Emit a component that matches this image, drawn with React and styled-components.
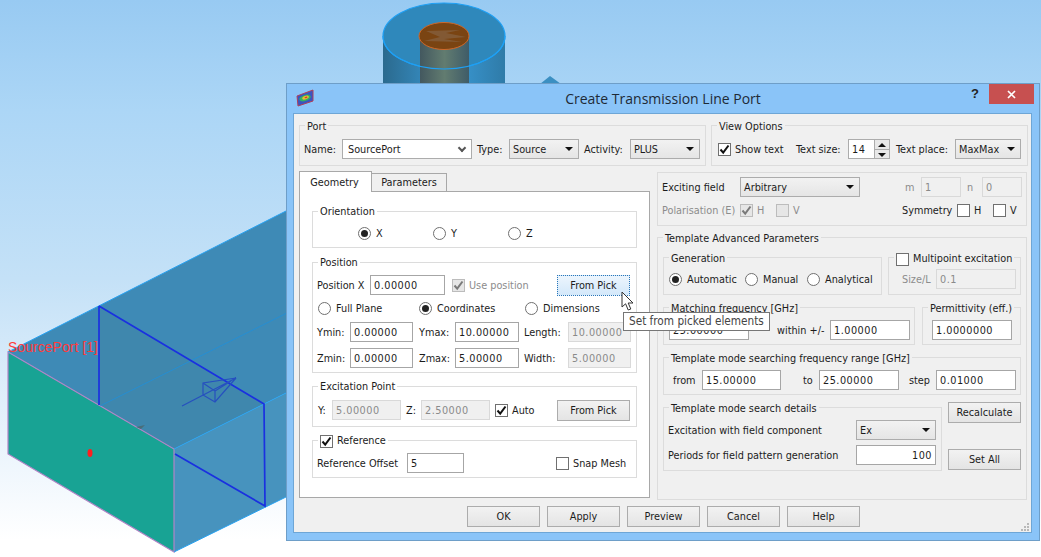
import React from 'react'
import styled, { createGlobalStyle } from 'styled-components'

const GlobalStyle = createGlobalStyle`
  body {
    margin: 0;
    background: #ffffff;
    font-family: "DejaVu Sans Condensed", "Liberation Sans", sans-serif;
    font-stretch: condensed;
    font-size: 10.8px;
    color: #1c1c1c;
  }
`

const Scene3D = () => (
  <SceneSvg viewBox="0 0 1041 557">
    <defs>
      <linearGradient id="outerBody" x1="0" x2="1" y1="0" y2="0">
        <stop offset="0" stopColor="#2b6a8e" />
        <stop offset="0.55" stopColor="#3a9ad6" />
        <stop offset="1" stopColor="#2f7ba8" />
      </linearGradient>
      <linearGradient id="innerBody" x1="0" x2="1" y1="0" y2="0">
        <stop offset="0" stopColor="#43585f" />
        <stop offset="0.5" stopColor="#627c70" />
        <stop offset="1" stopColor="#3f5c68" />
      </linearGradient>
    </defs>

    <rect x="383" y="36" width="122" height="50" fill="url(#outerBody)" />
    <ellipse cx="444" cy="36" rx="61" ry="33" fill="#2f88bb" stroke="#1ea0f5" strokeWidth="1.2" />
    <rect x="420" y="36" width="49" height="50" fill="url(#innerBody)" />
    <path d="M383 36 A61 33 0 0 0 505 36" fill="none" stroke="#1ea0f5" strokeWidth="1.2" />
    <ellipse cx="444" cy="36" rx="25" ry="13.5" fill="#7a4412" stroke="#d0692a" strokeWidth="1" />
    <path d="M426 31 L460 30 L446 33 L466 37 L444 39 L462 42 L424 41 L440 37 Z" fill="#8e7a68" opacity="0.4" />
    <polygon points="540,84 550,76 561,84" fill="#3b8fc2" />

    <polygon points="8,352 286,211 286,393 174,449" fill="#3e8ab6" />
    <polygon points="99,306 264,404 174,449 99,405" fill="#42829f" opacity="0.35" />
    <polygon points="174,449 286,393 286,497 174,552" fill="#4793be" />
    <polygon points="8,352 174,449 174,552 8,454" fill="#18a394" stroke="#b184c6" strokeWidth="1.2" />
    <path d="M8 352 L286 211 M174 449 L286 393 M174 552 L286 497" stroke="#27a2f2" strokeWidth="1" fill="none" />
    <path d="M100 406 L287 313" stroke="#1f8fdb" strokeWidth="0.8" fill="none" />
    <path d="M99 306 L99 405 M99 306 L264 404 L265 506 L175 454" stroke="#1a30e0" strokeWidth="1.7" fill="none" />
    <path d="M182 406 L236 378 L203 383 L203 395 L215 402 L236 378 M203 383 L215 391 L215 402 M215 391 L231 381" stroke="#2650bf" strokeWidth="1.2" fill="none" />
    <ellipse cx="90" cy="453" rx="2.5" ry="4" fill="#ff1f1f" />
    <polygon points="136,427 145,425 141,429" fill="#4a6d78" />
    <SceneLabel x="8" y="352" textLength="90">SourcePort [1]</SceneLabel>
  </SceneSvg>
)

const AppIcon = () => (
  <svg width="18" height="18" viewBox="0 0 18 18">
    <polygon points="1,7 17,1 17,12 2,17" fill="#3a55c0" stroke="#b0405a" strokeWidth="1" />
    <ellipse cx="9" cy="9" rx="6" ry="3" fill="#35b060" transform="rotate(-18 9 9)" />
    <ellipse cx="9.5" cy="8.6" rx="3.4" ry="1.7" fill="#e8c030" transform="rotate(-18 9.5 8.6)" />
    <ellipse cx="10" cy="8.4" rx="1.5" ry="0.8" fill="#d84030" transform="rotate(-18 10 8.4)" />
  </svg>
)

const Check = ({ checked, off, label, w, ml }) => (
  <Opt $w={w} $ml={ml} $off={off}>
    <Box $off={off}>
      {checked && (
        <svg width="11" height="11" viewBox="0 0 11 11">
          <path d="M1.5 5.5 L4.2 8.6 L9.5 1.5" fill="none" stroke={off ? '#7a7a7a' : '#111'} strokeWidth="2" />
        </svg>
      )}
    </Box>
    {label}
  </Opt>
)

const Radio = ({ checked, label, w }) => (
  <Opt $w={w}>
    <Round $on={checked} />
    {label}
  </Opt>
)

const Cursor = () => (
  <CursorSvg width="15" height="21" viewBox="0 0 15 21">
    <path d="M1 1 L1 16 L4.6 12.8 L7.2 19 L9.8 18 L7.2 12 L12 12 Z" fill="#ffffff" stroke="#333" strokeWidth="1" />
  </CursorSvg>
)

export default function App() {
  return (
    <Desktop>
      <GlobalStyle />
      <Scene3D />
      <Window>
        <TitleBar>
          <TitleIcon><AppIcon /></TitleIcon>
          <TitleText>Create Transmission Line Port</TitleText>
          <TitleControls>
            <HelpMark>?</HelpMark>
            <CloseButton>
              <svg width="9" height="9" viewBox="0 0 9 9">
                <path d="M1 1 L8 8 M8 1 L1 8" stroke="#fff" strokeWidth="1.7" fill="none" />
              </svg>
            </CloseButton>
          </TitleControls>
        </TitleBar>

        <Client>
          <Line>
            <Group $w={407} $h={41}>
              <Legend>Port</Legend>
              <Row $h={20} $mt={13} $pl={4}>
                <Label $w={38}>Name:</Label>
                <Combo $w={130} $editable>SourcePort</Combo>
                <Label $w={32} $ml={5}>Type:</Label>
                <Combo $w={70}>Source</Combo>
                <Label $w={46} $ml={5}>Activity:</Label>
                <Combo $w={70}>PLUS</Combo>
              </Row>
            </Group>
            <Group $w={317} $h={41} $ml={5}>
              <Legend>View Options</Legend>
              <Row $h={20} $mt={13} $pl={6}>
                <Check checked label="Show text" w={78} />
                <Label $w={52}>Text size:</Label>
                <Spin>
                  14
                  <SpinArrows>
                    <SpinUp />
                    <SpinDown />
                  </SpinArrows>
                </Spin>
                <Label $w={59} $ml={6}>Text place:</Label>
                <Combo $w={66}>MaxMax</Combo>
              </Row>
            </Group>
          </Line>

          <Line $mt={5}>
            <LeftColumn>
              <TabBar>
                <Tab $active>Geometry</Tab>
                <Tab>Parameters</Tab>
              </TabBar>
              <Pane>
                <Group $h={37} $white>
                  <Legend $white>Orientation</Legend>
                  <Row $h={14} $mt={14} $pl={45}>
                    <Radio checked label="X" w={75} />
                    <Radio label="Y" w={75} />
                    <Radio label="Z" w={75} />
                  </Row>
                </Group>

                <Group $h={111} $white $mt={14}>
                  <Legend $white>Position</Legend>
                  <Row $h={20} $mt={12} $pl={4}>
                    <Label $w={53}>Position X</Label>
                    <Field $w={75}>0.00000</Field>
                    <Check checked off label="Use position" w={105} ml={7} />
                    <Button $w={73} $focus>From Pick</Button>
                  </Row>
                  <Row $h={14} $mt={6} $pl={5}>
                    <Radio label="Full Plane" w={101} />
                    <Radio checked label="Coordinates" w={106} />
                    <Radio label="Dimensions" />
                  </Row>
                  <Row $h={20} $mt={7} $pl={4}>
                    <Label $w={33}>Ymin:</Label>
                    <Field $w={63}>0.00000</Field>
                    <Label $w={36} $ml={6}>Ymax:</Label>
                    <Field $w={64}>10.00000</Field>
                    <Label $w={44} $ml={5}>Length:</Label>
                    <Field $w={63} $off>10.00000</Field>
                  </Row>
                  <Row $h={20} $mt={6} $pl={4}>
                    <Label $w={33}>Zmin:</Label>
                    <Field $w={63}>0.00000</Field>
                    <Label $w={36} $ml={6}>Zmax:</Label>
                    <Field $w={64}>5.00000</Field>
                    <Label $w={44} $ml={5}>Width:</Label>
                    <Field $w={63} $off>5.00000</Field>
                  </Row>
                </Group>

                <Group $h={41} $white $mt={13}>
                  <Legend $white>Excitation Point</Legend>
                  <Row $h={20} $mt={13} $pl={5}>
                    <Label $w={14}>Y:</Label>
                    <Field $w={69} $off>5.00000</Field>
                    <Label $w={15} $ml={5}>Z:</Label>
                    <Field $w={69} $off>2.50000</Field>
                    <Check checked label="Auto" w={62} ml={5} />
                    <Button $w={73}>From Pick</Button>
                  </Row>
                </Group>

                <Group $h={38} $white $mt={13}>
                  <Legend $white>
                    <Check checked label="Reference" />
                  </Legend>
                  <Row $h={20} $mt={12} $pl={4}>
                    <Label $w={90}>Reference Offset</Label>
                    <Field $w={57}>5</Field>
                    <Check label="Snap Mesh" ml={92} />
                  </Row>
                </Group>
              </Pane>
            </LeftColumn>

            <RightColumn>
              <Group $h={54}>
                <Row $h={20} $mt={4} $pl={4}>
                  <Label $w={78}>Exciting field</Label>
                  <Combo $w={120}>Arbitrary</Combo>
                  <Label $w={16} $ml={45} $off>m</Label>
                  <Field $w={40} $off>1</Field>
                  <Label $w={15} $ml={6} $off>n</Label>
                  <Field $w={40} $off>0</Field>
                </Row>
                <Row $h={14} $mt={6} $pl={4}>
                  <Label $w={78} $off>Polarisation (E)</Label>
                  <Check checked off label="H" w={36} />
                  <Check off label="V" w={126} />
                  <Label $w={55}>Symmetry</Label>
                  <Check label="H" w={36} />
                  <Check label="V" />
                </Row>
              </Group>

              <Group $h={263} $mt={11}>
                <Legend>Template Advanced Parameters</Legend>
                <Line $mt={19} $pl={5}>
                  <Group $w={219} $h={38}>
                    <Legend>Generation</Legend>
                    <Row $h={14} $mt={14} $pl={5}>
                      <Radio checked label="Automatic" w={76} />
                      <Radio label="Manual" w={62} />
                      <Radio label="Analytical" />
                    </Row>
                  </Group>
                  <Group $w={133} $h={38} $ml={6}>
                    <Legend>
                      <Check label="Multipoint excitation" />
                    </Legend>
                    <Row $h={20} $mt={11} $pl={13}>
                      <Label $w={34} $off>Size/L</Label>
                      <Field $w={80} $off>0.1</Field>
                    </Row>
                  </Group>
                </Line>

                <Line $mt={12} $pl={5}>
                  <Group $w={252} $h={38}>
                    <Legend>Matching frequency [GHz]</Legend>
                    <Row $h={20} $mt={12} $pl={5}>
                      <Field $w={80}>25.00000</Field>
                      <Label $w={53} $ml={28}>within +/-</Label>
                      <Field $w={80}>1.00000</Field>
                    </Row>
                  </Group>
                  <Group $w={99} $h={38} $ml={7}>
                    <Legend>Permittivity (eff.)</Legend>
                    <Row $h={20} $mt={12} $pl={9}>
                      <Field $w={80}>1.0000000</Field>
                    </Row>
                  </Group>
                </Line>

                <Line $mt={12} $pl={5}>
                  <Group $w={358} $h={38}>
                    <Legend>Template mode searching frequency range [GHz]</Legend>
                    <Row $h={20} $mt={12} $pl={9}>
                      <Label $w={29}>from</Label>
                      <Field $w={79}>15.00000</Field>
                      <Label $w={16} $ml={22}>to</Label>
                      <Field $w={80}>25.00000</Field>
                      <Label $w={27} $ml={10}>step</Label>
                      <Field $w={80}>0.01000</Field>
                    </Row>
                  </Group>
                </Line>

                <Line $mt={7} $pl={5}>
                  <Group $w={279} $h={64} $mt={5}>
                    <Legend>Template mode search details</Legend>
                    <Row $h={20} $mt={12} $pl={4}>
                      <Label $w={188}>Excitation with field component</Label>
                      <Combo $w={80}>Ex</Combo>
                    </Row>
                    <Row $h={20} $mt={5} $pl={4}>
                      <Label $w={188}>Periods for field pattern generation</Label>
                      <Field $w={80} $right>100</Field>
                    </Row>
                  </Group>
                  <SideButtons>
                    <Button $w={73}>Recalculate</Button>
                    <Button $w={73}>Set All</Button>
                  </SideButtons>
                </Line>
              </Group>
            </RightColumn>
          </Line>

          <ButtonBar>
            <Button $w={73}>OK</Button>
            <Button $w={73}>Apply</Button>
            <Button $w={73}>Preview</Button>
            <Button $w={73}>Cancel</Button>
            <Button $w={73}>Help</Button>
          </ButtonBar>

          <Grip width="8" height="8" viewBox="0 0 8 8">
            <path d="M6 0h2v2H6zM3 3h2v2H3zM6 3h2v2H6zM0 6h2v2H0zM3 6h2v2H3zM6 6h2v2H6z" fill="#b8b8b8" />
          </Grip>
        </Client>

        <Tooltip>Set from picked elements</Tooltip>
        <Cursor />
      </Window>
    </Desktop>
  )
}

const Desktop = styled.div`
  position: relative;
  width: 1041px;
  height: 557px;
  overflow: hidden;
  background: linear-gradient(180deg, #98caf2 0%, #acd6f6 20%, #c4e1f7 50%, #e8f3fc 78%, #ffffff 97%);
`
const SceneSvg = styled.svg`
  display: block;
  width: 1041px;
  height: 557px;
`
const SceneLabel = styled.text`
  font-family: "Liberation Sans", sans-serif;
  font-size: 14px;
  fill: #ff3b3b;
`
const Window = styled.div`
  position: absolute;
  left: 286px;
  top: 83px;
  width: 754px;
  height: 458px;
  box-sizing: border-box;
  display: flex;
  flex-direction: column;
  padding: 0 7px 7px 6px;
  background: #8ac4f8;
  border: 1px solid #6e9ec8;
`
const TitleBar = styled.div`
  display: grid;
  grid-template-columns: 1fr auto 1fr;
  align-items: start;
  height: 29px;
  margin: 0 -7px 0 -6px;
`
const TitleIcon = styled.div`
  padding: 5px 0 0 9px;
`
const TitleText = styled.div`
  padding-top: 5px;
  font-family: "Open Sans", sans-serif;
  font-stretch: normal;
  font-size: 14px;
  line-height: 19px;
  color: #1e2a36;
`
const TitleControls = styled.div`
  display: flex;
  justify-content: flex-end;
  padding-right: 5px;
`
const HelpMark = styled.div`
  margin: 2px 10px 0 0;
  font-family: "Liberation Sans", sans-serif;
  font-weight: bold;
  font-size: 13px;
  line-height: 16px;
  color: #222;
`
const CloseButton = styled.div`
  display: flex;
  align-items: center;
  justify-content: center;
  width: 45px;
  height: 20px;
  background: #c75050;
`
const Client = styled.div`
  position: relative;
  flex: 1;
  box-sizing: border-box;
  padding: 11px 0 0 5px;
  background: #f0f0f0;
  border: 1px solid #6ea6d6;
`
const Line = styled.div`
  display: flex;
  margin-top: ${p => p.$mt || 0}px;
  padding-left: ${p => p.$pl || 0}px;
`
const Row = styled.div`
  display: flex;
  align-items: center;
  height: ${p => p.$h}px;
  margin-top: ${p => p.$mt || 0}px;
  padding-left: ${p => p.$pl || 0}px;
`
const Group = styled.div`
  position: relative;
  box-sizing: border-box;
  flex-shrink: 0;
  display: flow-root;
  width: ${p => (p.$w ? `${p.$w}px` : 'auto')};
  height: ${p => p.$h}px;
  margin-top: ${p => p.$mt || 0}px;
  margin-left: ${p => p.$ml || 0}px;
  border: 1px solid #dcdcdc;
  background: ${p => (p.$white ? '#ffffff' : 'transparent')};
`
const Legend = styled.div`
  position: absolute;
  top: ${p => (p.$white ? -7 : -6)}px;
  left: 5px;
  padding: 0 2px;
  line-height: 14px;
  white-space: nowrap;
  background: ${p => (p.$white ? '#ffffff' : '#f0f0f0')};
`
const Label = styled.div`
  flex-shrink: 0;
  box-sizing: border-box;
  width: ${p => p.$w}px;
  margin-left: ${p => p.$ml || 0}px;
  white-space: nowrap;
  color: ${p => (p.$off ? '#8c8c8c' : '#1c1c1c')};
`
const Field = styled.div`
  flex-shrink: 0;
  box-sizing: border-box;
  width: ${p => p.$w}px;
  height: 20px;
  padding: 0 3px;
  line-height: 20px;
  letter-spacing: 0.5px;
  white-space: nowrap;
  overflow: hidden;
  text-align: ${p => (p.$right ? 'right' : 'left')};
  background: ${p => (p.$off ? '#f0f0f0' : '#ffffff')};
  border: 1px solid ${p => (p.$off ? '#d9d9d9' : '#a6a6a6')};
  color: ${p => (p.$off ? '#8a8a8a' : '#1c1c1c')};
`
const Combo = styled.div`
  position: relative;
  flex-shrink: 0;
  box-sizing: border-box;
  width: ${p => p.$w}px;
  height: 20px;
  padding: 0 ${p => (p.$editable ? 5 : 3)}px;
  line-height: ${p => (p.$editable ? 20 : 19)}px;
  white-space: nowrap;
  background: ${p => (p.$editable ? '#ffffff' : 'linear-gradient(180deg, #f2f2f2, #e5e5e5)')};
  border: 1px solid #acacac;

  &::after {
    content: '';
    position: absolute;
    top: 7px;
    right: 5px;
    ${p =>
      p.$editable
        ? `width: 4px; height: 4px; top: 5px; right: 6px; border-right: 2px solid #555; border-bottom: 2px solid #555; transform: rotate(45deg);`
        : `border-left: 4px solid transparent; border-right: 4px solid transparent; border-top: 4px solid #111;`}
  }
`
const Spin = styled.div`
  display: flex;
  justify-content: space-between;
  flex-shrink: 0;
  box-sizing: border-box;
  width: 42px;
  height: 20px;
  padding-left: 3px;
  line-height: 20px;
  letter-spacing: 0.5px;
  background: #fff;
  border: 1px solid #acacac;
`
const SpinArrows = styled.div`
  display: flex;
  flex-direction: column;
  width: 14px;
  background: #e8e8e8;
  border-left: 1px solid #acacac;
`
const SpinUp = styled.div`
  flex: 1;
  border-bottom: 1px solid #acacac;
  position: relative;
  &::after {
    content: '';
    position: absolute;
    left: 3px;
    top: 3px;
    border-left: 4px solid transparent;
    border-right: 4px solid transparent;
    border-bottom: 4px solid #111;
  }
`
const SpinDown = styled.div`
  flex: 1;
  position: relative;
  &::after {
    content: '';
    position: absolute;
    left: 3px;
    top: 3px;
    border-left: 4px solid transparent;
    border-right: 4px solid transparent;
    border-top: 4px solid #111;
  }
`
const Opt = styled.div`
  display: flex;
  align-items: center;
  flex-shrink: 0;
  gap: 4px;
  width: ${p => (p.$w ? `${p.$w}px` : 'auto')};
  margin-left: ${p => p.$ml || 0}px;
  white-space: nowrap;
  color: ${p => (p.$off ? '#8c8c8c' : 'inherit')};
`
const Box = styled.div`
  display: flex;
  align-items: center;
  justify-content: center;
  box-sizing: border-box;
  width: 13px;
  height: 13px;
  background: ${p => (p.$off ? '#e6e6e6' : '#ffffff')};
  border: 1px solid ${p => (p.$off ? '#bcbcbc' : '#707070')};
`
const Round = styled.div`
  position: relative;
  box-sizing: border-box;
  width: 13px;
  height: 13px;
  margin-right: 1px;
  border-radius: 50%;
  background: #fff;
  border: 1px solid #707070;

  &::after {
    content: '';
    display: ${p => (p.$on ? 'block' : 'none')};
    position: absolute;
    left: 2px;
    top: 2px;
    width: 7px;
    height: 7px;
    border-radius: 50%;
    background: #222;
  }
`
const Button = styled.div`
  flex-shrink: 0;
  box-sizing: border-box;
  width: ${p => p.$w}px;
  height: 21px;
  line-height: 19px;
  text-align: center;
  background: ${p => (p.$focus ? 'linear-gradient(180deg, #ecf5fd, #d3e8fa)' : 'linear-gradient(180deg, #f2f2f2, #e4e4e4)')};
  border: 1px ${p => (p.$focus ? 'dotted #2a76b8' : 'solid #acacac')};
`
const LeftColumn = styled.div`
  width: 351px;
  flex-shrink: 0;
`
const TabBar = styled.div`
  display: flex;
  align-items: flex-end;
  position: relative;
  margin-bottom: -1px;
`
const Tab = styled.div`
  box-sizing: border-box;
  position: relative;
  width: ${p => (p.$active ? 73 : 75)}px;
  height: ${p => (p.$active ? 21 : 19)}px;
  padding-top: ${p => (p.$active ? 4 : 2)}px;
  padding-right: ${p => (p.$active ? 2 : 0)}px;
  text-align: center;
  line-height: 14px;
  background: ${p => (p.$active ? '#ffffff' : '#f0f0f0')};
  border: 1px solid #a8a8a8;
  border-bottom: ${p => (p.$active ? 'none' : '1px solid #a8a8a8')};
  border-left: ${p => (p.$active ? '1px solid #a8a8a8' : 'none')};
  z-index: ${p => (p.$active ? 1 : 0)};
`
const Pane = styled.div`
  box-sizing: border-box;
  height: 307px;
  padding: 19px 12px 0;
  background: #fff;
  border: 1px solid #a8a8a8;
`
const RightColumn = styled.div`
  width: 370px;
  margin-left: 7px;
  padding-top: 1px;
  flex-shrink: 0;
`
const SideButtons = styled.div`
  display: flex;
  flex-direction: column;
  justify-content: space-between;
  height: 68px;
  margin-left: 6px;
`
const ButtonBar = styled.div`
  display: flex;
  gap: 7px;
  margin-top: 6px;
  padding-left: 168px;
`
const Grip = styled.svg`
  position: absolute;
  right: 2px;
  bottom: 1px;
`
const Tooltip = styled.div`
  position: absolute;
  left: 336px;
  top: 228px;
  box-sizing: border-box;
  height: 19px;
  padding: 0 5px;
  font-size: 11.7px;
  line-height: 17px;
  white-space: nowrap;
  background: #fff;
  border: 1px solid #767676;
  color: #444;
`
const CursorSvg = styled.svg`
  position: absolute;
  left: 334px;
  top: 207px;
`
